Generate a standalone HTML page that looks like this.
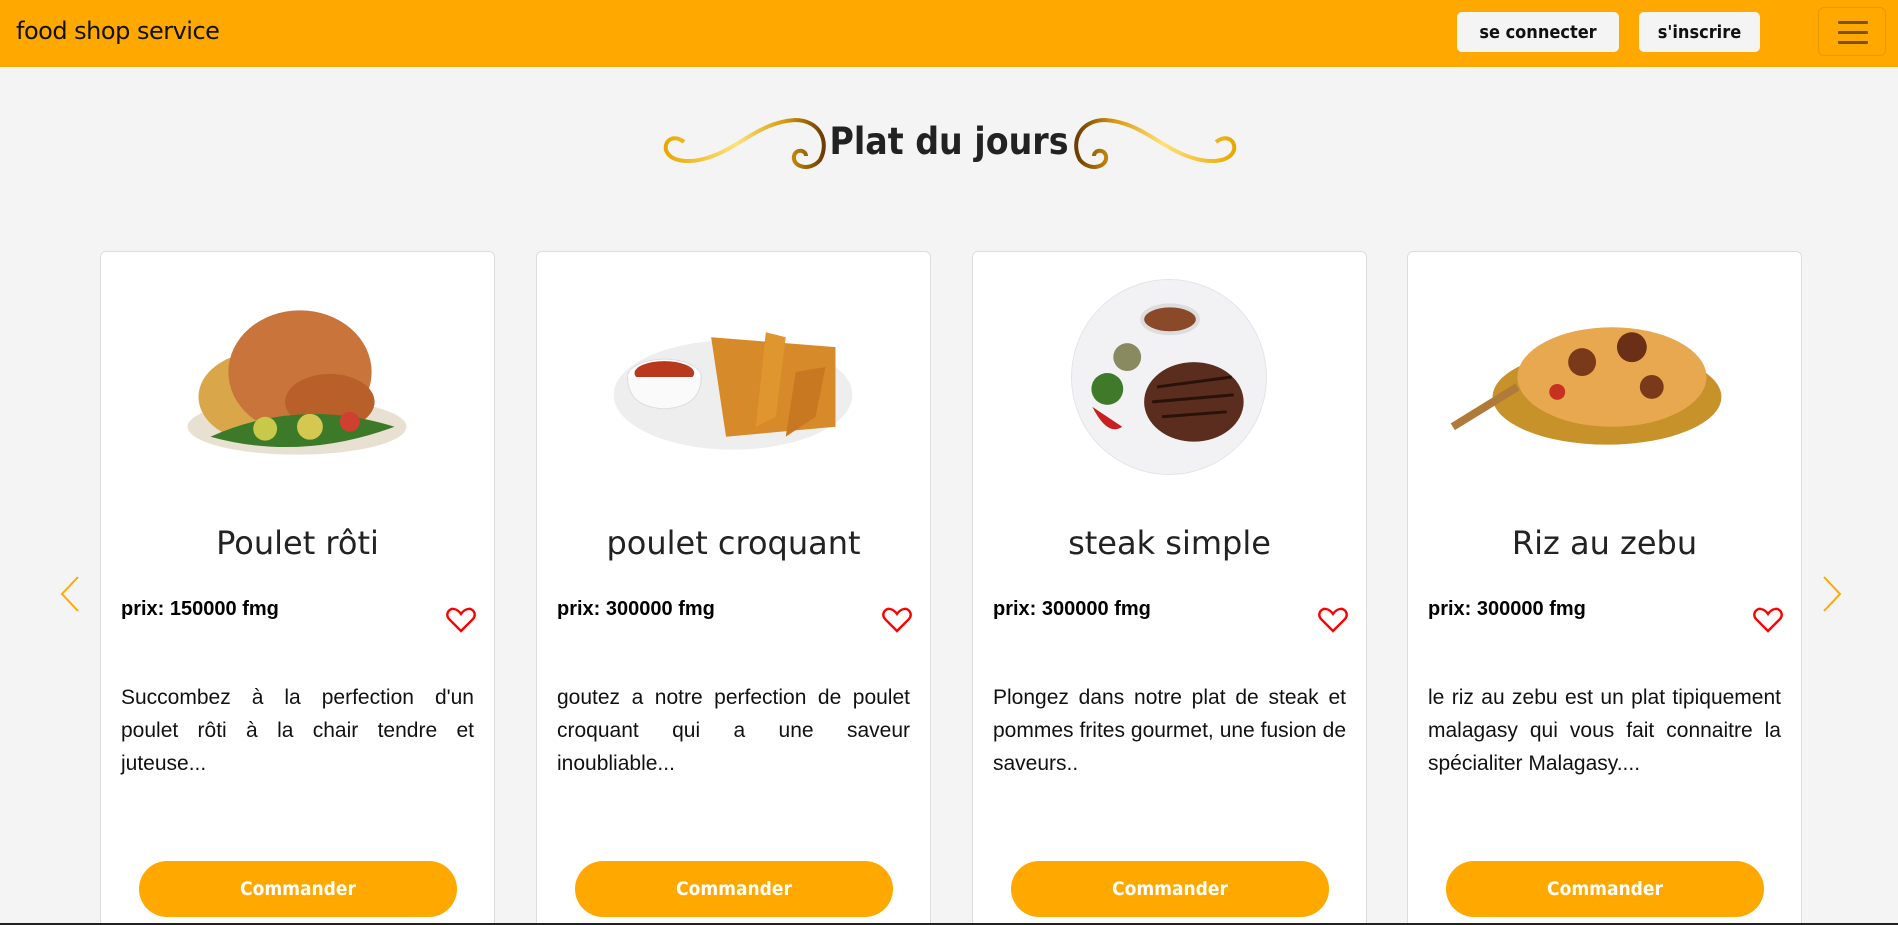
<!DOCTYPE html>
<html><head><meta charset="utf-8"><style>
*{box-sizing:border-box;margin:0;padding:0}
html,body{width:1898px;height:925px;overflow:hidden}
body{background:#f4f4f4;font-family:"Liberation Sans",sans-serif;position:relative}
.nav{position:absolute;left:0;top:0;width:1898px;height:67px;background:#ffa800}
.logo{position:absolute;left:16px;top:17px;font-family:"Comic Sans MS","DejaVu Sans",sans-serif;font-size:24px;color:#111;letter-spacing:-0.5px}
.btn{position:absolute;top:12px;height:40px;background:#f4f4f4;border-radius:5px;font-family:"DejaVu Sans Condensed","DejaVu Sans",sans-serif;font-size:18px;color:#111;text-align:center;line-height:42px;font-weight:600}
.burger{position:absolute;left:1818px;top:7px;width:68px;height:49px;border:1px solid #e59a00;border-radius:6px}
.burger i{position:absolute;left:19px;width:30px;height:3px;background:#7a5200;border-radius:1px}
.title{position:absolute;left:0;width:1898px;top:120px;text-align:center;font-family:"DejaVu Sans Condensed","DejaVu Sans",sans-serif;font-size:37px;font-weight:bold;color:#222}
.card{position:absolute;top:251px;width:395px;height:674px;background:#fff;border:1px solid #ddd;border-bottom:none;border-radius:6px 6px 0 0}
.card h2{position:absolute;top:272px;left:0;width:100%;text-align:center;font-family:"Comic Sans MS","DejaVu Sans",sans-serif;font-weight:normal;font-size:32px;color:#222}
.card .img{position:absolute;left:0;top:25px;width:100%;height:200px}
.prix{position:absolute;left:20px;top:346px;font-weight:bold;font-size:20px;color:#000}
.heart{position:absolute;left:345px;top:355px}
.desc{position:absolute;left:20px;top:429px;width:353px;font-size:21px;line-height:33px;text-align:justify;color:#111}
.cmd{position:absolute;left:38px;top:609px;width:318px;height:56px;border-radius:28px;background:#ffa800;color:#fff;font-family:"DejaVu Sans Condensed","DejaVu Sans",sans-serif;font-weight:bold;font-size:19px;text-align:center;line-height:56px}
.arrow{position:absolute;top:574px}
</style></head><body>
<div class="nav">
 <div class="logo">food shop service</div>
 <div class="btn" style="left:1457px;width:162px">se connecter</div>
 <div class="btn" style="left:1639px;width:121px">s'inscrire</div>
 <div class="burger"><i style="top:13px"></i><i style="top:23px"></i><i style="top:33px"></i></div>
</div>
<svg style="position:absolute;left:660px;top:112px" width="580" height="68" viewBox="0 0 580 68">
 <defs><linearGradient id="g" x1="0" x2="1"><stop offset="0" stop-color="#e8a800"/><stop offset=".45" stop-color="#ffe17a"/><stop offset=".75" stop-color="#d89b10"/><stop offset="1" stop-color="#6b3b00"/></linearGradient>
 <linearGradient id="g2" x1="1" x2="0"><stop offset="0" stop-color="#e8a800"/><stop offset=".45" stop-color="#ffe17a"/><stop offset=".75" stop-color="#d89b10"/><stop offset="1" stop-color="#6b3b00"/></linearGradient></defs>
 <path d="M24 30 C14 22 4 28 6 38 C10 50 30 52 50 45 C80 35 100 10 135 8 C160 8 170 30 160 48 C150 60 132 55 134 44 C136 36 146 38 146 44" fill="none" stroke="url(#g)" stroke-width="4"/>
 <path d="M556 30 C566 22 576 28 574 38 C570 50 550 52 530 45 C500 35 480 10 445 8 C420 8 410 30 420 48 C430 60 448 55 446 44 C444 36 434 38 434 44" fill="none" stroke="url(#g2)" stroke-width="4"/>
</svg>
<div class="title">Plat du jours</div>

<svg class="arrow" style="left:58px" width="24" height="40"><path d="M20 3 L4 20 L20 37" fill="none" stroke="#ffa800" stroke-width="2"/></svg>
<svg class="arrow" style="left:1820px" width="24" height="40"><path d="M4 3 L20 20 L4 37" fill="none" stroke="#ffa800" stroke-width="2"/></svg>

<div class="card" style="left:100px">
 <svg class="img" viewBox="0 0 395 200"><ellipse cx="197" cy="150" rx="110" ry="28" fill="#e8e0d0"/><ellipse cx="160" cy="120" rx="62" ry="45" fill="#d9a64a"/><ellipse cx="200" cy="95" rx="72" ry="62" fill="#c9743a"/><ellipse cx="230" cy="125" rx="45" ry="28" fill="#b85f2a"/><path d="M110 160 Q200 120 295 150 Q200 185 110 160Z" fill="#3c7a2a"/><circle cx="165" cy="152" r="12" fill="#c8c84a"/><circle cx="210" cy="150" r="13" fill="#d4c850"/><circle cx="250" cy="145" r="10" fill="#d04030"/></svg>
 <h2>Poulet rôti</h2>
 <div class="prix">prix: 150000 fmg</div>
 <svg class="heart" width="30" height="26" viewBox="0 0 30 26"><path d="M15 24 L3 12 C-1 7 3 1 8 2 C11 2.5 13 4 15 7 C17 4 19 2.5 22 2 C27 1 31 7 27 12 Z" fill="none" stroke="#f00" stroke-width="2.4"/></svg>
 <div class="desc">Succombez à la perfection d'un poulet rôti à la chair tendre et juteuse...</div>
 <div class="cmd">Commander</div>
</div>

<div class="card" style="left:536px">
 <svg class="img" viewBox="0 0 395 200"><ellipse cx="197" cy="118" rx="120" ry="55" fill="#eeeeee"/><path d="M175 60 L300 70 L300 150 L190 160 Z" fill="#d78a2a"/><path d="M230 55 L250 60 L240 140 L220 150Z" fill="#e0962e"/><path d="M260 95 L290 90 L280 140 L250 160Z" fill="#c87820"/><ellipse cx="128" cy="100" rx="37" ry="18" fill="#fff" stroke="#ddd"/><ellipse cx="128" cy="96" rx="30" ry="12" fill="#b8391e"/><path d="M91 100 Q91 130 128 132 Q165 130 165 100" fill="#fafafa" stroke="#ddd"/></svg>
 <h2>poulet croquant</h2>
 <div class="prix">prix: 300000 fmg</div>
 <svg class="heart" width="30" height="26" viewBox="0 0 30 26"><path d="M15 24 L3 12 C-1 7 3 1 8 2 C11 2.5 13 4 15 7 C17 4 19 2.5 22 2 C27 1 31 7 27 12 Z" fill="none" stroke="#f00" stroke-width="2.4"/></svg>
 <div class="desc">goutez a notre perfection de poulet croquant qui a une saveur inoubliable...</div>
 <div class="cmd">Commander</div>
</div>

<div class="card" style="left:972px">
 <svg class="img" viewBox="0 0 395 200"><circle cx="197" cy="100" r="98" fill="#f2f2f4" stroke="#e4e4e8"/><ellipse cx="222" cy="125" rx="50" ry="40" fill="#5a2d1e"/><path d="M185 110 L260 100 M180 125 L262 118 M190 140 L255 135" stroke="#2a120a" stroke-width="3"/><ellipse cx="198" cy="42" rx="28" ry="14" fill="#8a4a2a" stroke="#ddd" stroke-width="4"/><circle cx="155" cy="80" r="14" fill="#8a8a60"/><circle cx="135" cy="112" r="16" fill="#3f7a2a"/><path d="M120 130 Q135 160 150 150 Z" fill="#c82020"/></svg>
 <h2>steak simple</h2>
 <div class="prix">prix: 300000 fmg</div>
 <svg class="heart" width="30" height="26" viewBox="0 0 30 26"><path d="M15 24 L3 12 C-1 7 3 1 8 2 C11 2.5 13 4 15 7 C17 4 19 2.5 22 2 C27 1 31 7 27 12 Z" fill="none" stroke="#f00" stroke-width="2.4"/></svg>
 <div class="desc">Plongez dans notre plat de steak et pommes frites gourmet, une fusion de saveurs..</div>
 <div class="cmd">Commander</div>
</div>

<div class="card" style="left:1407px">
 <svg class="img" viewBox="0 0 395 200"><ellipse cx="200" cy="120" rx="115" ry="48" fill="#c8922a"/><ellipse cx="205" cy="100" rx="95" ry="50" fill="#e8a850"/><circle cx="175" cy="85" r="14" fill="#7a3a1a"/><circle cx="225" cy="70" r="15" fill="#6a2f16"/><circle cx="245" cy="110" r="12" fill="#7a3a1a"/><circle cx="150" cy="115" r="8" fill="#c83020"/><path d="M45 150 L110 110" stroke="#b07a3a" stroke-width="8"/></svg>
 <h2>Riz au zebu</h2>
 <div class="prix">prix: 300000 fmg</div>
 <svg class="heart" width="30" height="26" viewBox="0 0 30 26"><path d="M15 24 L3 12 C-1 7 3 1 8 2 C11 2.5 13 4 15 7 C17 4 19 2.5 22 2 C27 1 31 7 27 12 Z" fill="none" stroke="#f00" stroke-width="2.4"/></svg>
 <div class="desc">le riz au zebu est un plat tipiquement malagasy qui vous fait connaitre la spécialiter Malagasy....</div>
 <div class="cmd">Commander</div>
</div>
<div style="position:absolute;left:0;top:923px;width:1898px;height:2px;background:#222"></div>
</body></html>
